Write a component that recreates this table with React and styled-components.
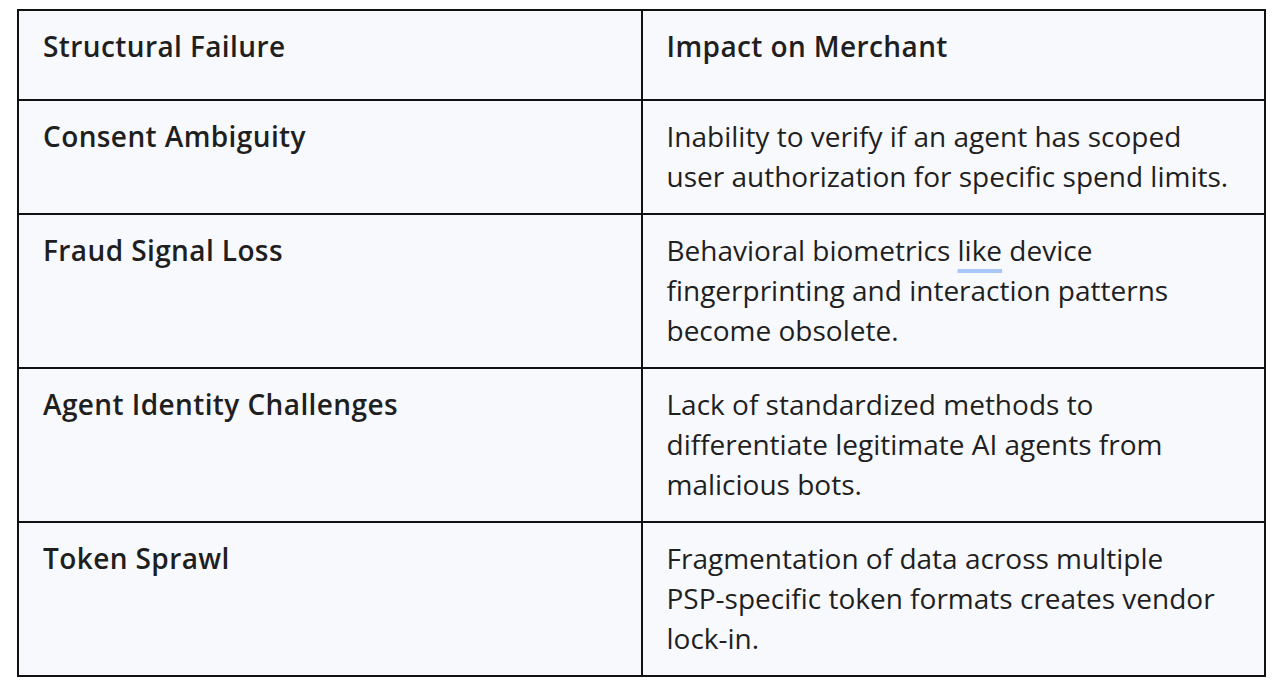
import React from 'react'
import styled, { createGlobalStyle } from 'styled-components'

const GlobalStyle = createGlobalStyle`
  html, body {
    margin: 0;
    padding: 0;
    background: #ffffff;
  }
  body {
    font-family: "Open Sans", Roboto, "Liberation Sans", sans-serif;
    color: #1f1f1f;
  }
`

const Page = styled.div`
  padding: 9px 14px 0 17px;
`

const Table = styled.table`
  width: 100%;
  border-collapse: collapse;
  table-layout: fixed;
  background: #f8f9fd;
  border: 2px solid #111;
  font-size: 28px;
  line-height: 40px;
`

const Cell = styled.td`
  border: 2px solid #111;
  vertical-align: top;
  padding: ${(p) => (p.$head ? '15px 24px 33px' : '15px 24px 17px')};
  font-weight: ${(p) => (p.$bold ? 600 : 400)};
  letter-spacing: ${(p) => (p.$bold ? '0.4px' : '0')};
  color: #1f1f1f;
`

const Mark = styled.span`
  text-decoration: underline;
  text-decoration-color: #a8c7fa;
  text-decoration-thickness: 4px;
  text-underline-offset: 8px;
`

const NoBreak = styled.span`
  white-space: nowrap;
`

const rows = [
  ['Consent Ambiguity', 'Inability to verify if an agent has scoped user authorization for specific spend limits.'],
  [
    'Fraud Signal Loss',
    <>
      Behavioral biometrics <Mark>like</Mark> device fingerprinting and interaction patterns become obsolete.
    </>,
  ],
  ['Agent Identity Challenges', 'Lack of standardized methods to differentiate legitimate AI agents from malicious bots.'],
  [
    'Token Sprawl',
    <>
      Fragmentation of data across multiple <NoBreak>PSP-specific</NoBreak> token formats creates vendor{' '}
      <NoBreak>lock-in.</NoBreak>
    </>,
  ],
]

export default function App() {
  return (
    <Page>
      <GlobalStyle />
      <Table>
        <tbody>
          <tr>
            <Cell $head $bold>Structural Failure</Cell>
            <Cell $head $bold>Impact on Merchant</Cell>
          </tr>
          {rows.map(([name, impact]) => (
            <tr key={name}>
              <Cell $bold>{name}</Cell>
              <Cell>{impact}</Cell>
            </tr>
          ))}
        </tbody>
      </Table>
    </Page>
  )
}
